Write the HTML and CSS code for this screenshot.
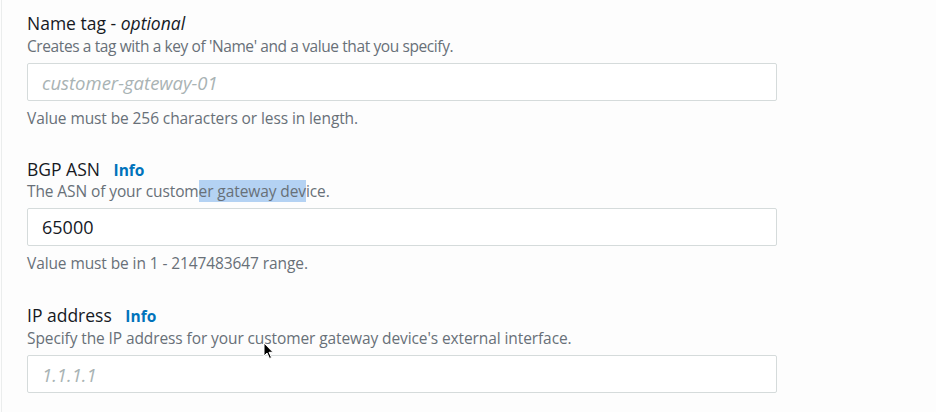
FILE: index.html
```html
<!DOCTYPE html>
<html lang="en">
<head>
<meta charset="utf-8">
<title>Customer gateway</title>
<link rel="stylesheet" href="styles.css">
</head>
<body>
<div class="panel">
  <div class="field">
    <div class="label">Name tag - <i>optional</i></div>
    <div class="desc first">Creates a tag with a key of 'Name' and a value that you specify.</div>
    <div class="input placeholder">customer-gateway-01</div>
    <div class="hint">Value must be 256 characters or less in length.</div>
  </div>
  <div class="field">
    <div class="label">BGP ASN <span class="info">Info</span></div>
    <div class="desc">The ASN of your custom<span class="sel">er gateway dev</span>ice.</div>
    <div class="input">65000</div>
    <div class="hint">Value must be in 1 - 2147483647 range.</div>
  </div>
  <div class="field last">
    <div class="label">IP address <span class="info">Info</span></div>
    <div class="desc">Specify the IP address for your customer gateway device's external interface.</div>
    <div class="input placeholder">1.1.1.1</div>
  </div>
  <svg class="cursor" width="12" height="18" viewBox="0 0 12 18"><path d="M1 1 L1 14 L4 11 L6.5 16.5 L8.5 15.5 L6 10.3 L10 10.3 Z" fill="#000" stroke="#fff" stroke-width="1"/></svg>
</div>
</body>
</html>
```
FILE: styles.css
```css
html, body {
  margin: 0;
  padding: 0;
  background: #fdfdfd;
}
body {
  font-family: "Open Sans", "Noto Sans", sans-serif;
  color: #16191f;
  width: 936px;
  height: 412px;
  overflow: hidden;
}
.panel {
  position: relative;
  margin-left: 1px;
  border-left: 1px solid #ebeded;
  padding: 11px 0 0 25px;
  height: 412px;
  box-sizing: border-box;
  display: flex;
  flex-direction: column;
  gap: 29px;
}
.field {
  width: 750px;
  display: flex;
  flex-direction: column;
}
.field.last {
  margin-top: 1px;
}
.field.last .desc {
  margin-top: 1px;
}
.label {
  font-size: 17.5px;
  line-height: 24px;
  height: 24px;
  color: #16191f;
}
.label i,
.label .info {
  line-height: 1;
}
.info {
  color: #0073bb;
  font-weight: 700;
  font-size: 15.5px;
  margin-left: 9px;
}
.desc {
  margin-top: 0;
  font-size: 15.5px;
  line-height: 20px;
  color: #687078;
  letter-spacing: -0.1px;
}
.desc.first {
  margin-top: 1px;
  letter-spacing: -0.4px;
}
.sel {
  background: #b4d2f3;
}
.input {
  margin-top: 7px;
  height: 38px;
  box-sizing: border-box;
  border: 1px solid #d5dbdb;
  border-radius: 2px;
  background: #fff;
  padding: 0 14px;
  display: flex;
  align-items: center;
  font-size: 18px;
  color: #16191f;
}
.placeholder {
  font-style: italic;
  color: #a9b3b4;
  font-size: 18.5px;
}
.hint {
  margin-top: 7px;
  font-size: 15.5px;
  line-height: 20px;
  color: #687078;
  letter-spacing: -0.1px;
}
.cursor {
  position: absolute;
  left: 261px;
  top: 342px;
}
```
